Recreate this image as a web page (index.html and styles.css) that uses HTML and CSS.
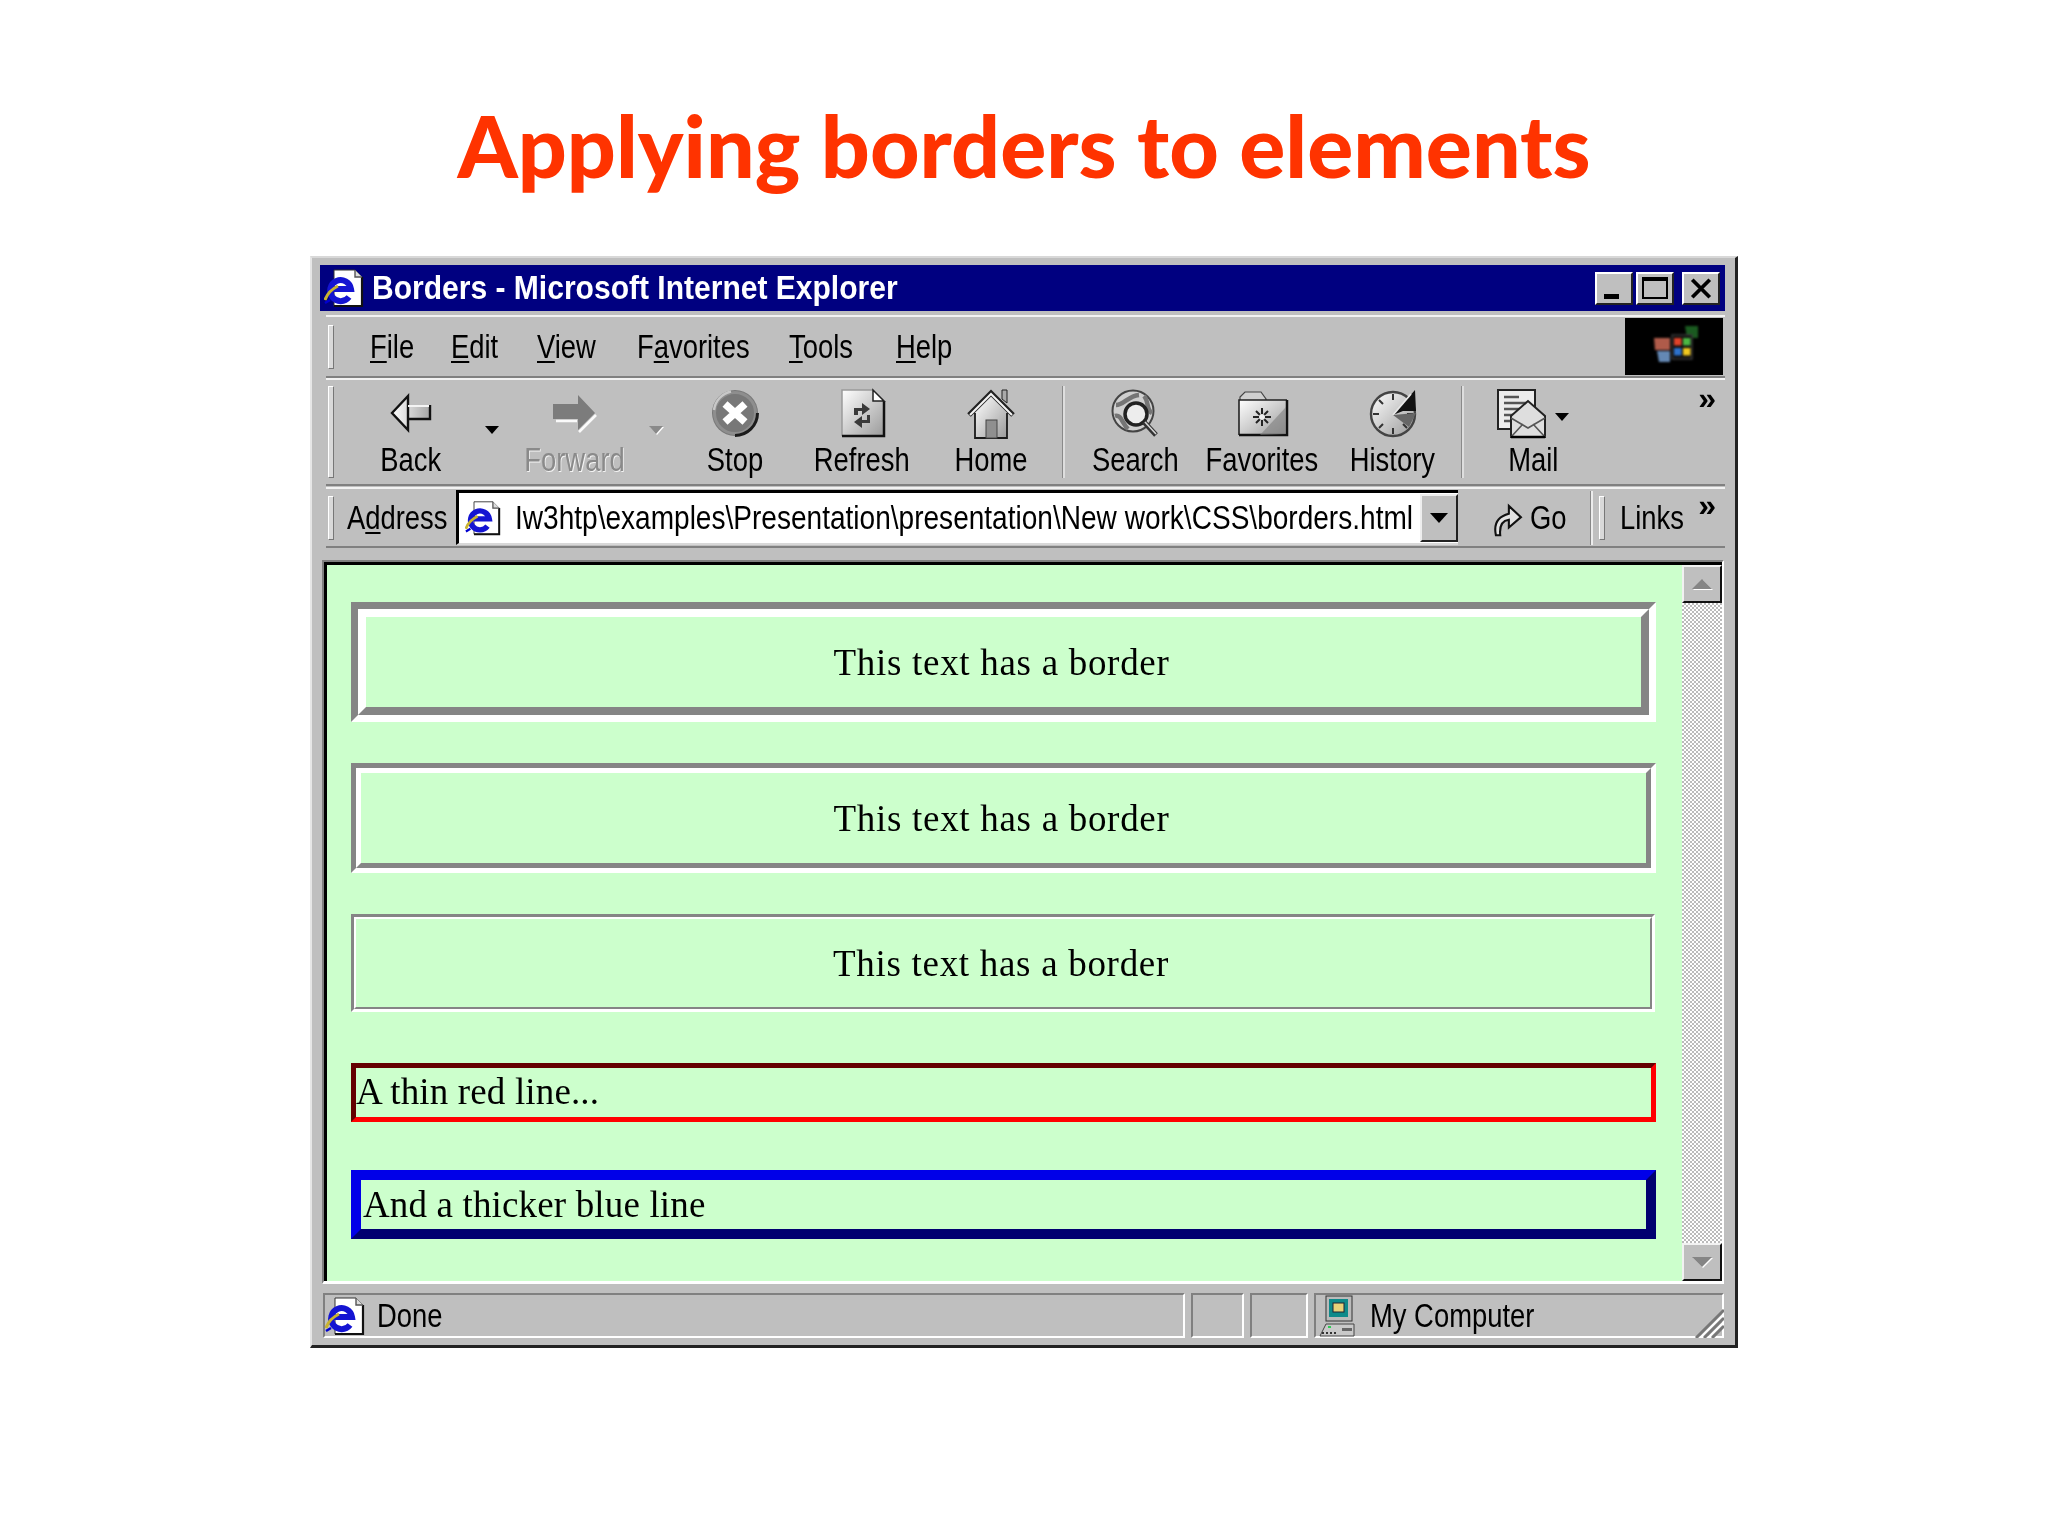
FILE: index.html
```html
<!DOCTYPE html>
<html lang="en">
<head>
<meta charset="utf-8">
<title>Applying borders to elements</title>
<link rel="stylesheet" href="styles.css">
</head>
<body>
<svg class="defs" width="0" height="0" aria-hidden="true">
  <defs>
    <linearGradient id="sheen" x1="0" y1="0" x2="1" y2="1"><stop offset="0" stop-color="#fff"/><stop offset="1" stop-color="#9a9a9a"/></linearGradient>
    <linearGradient id="sheenX" x1="0" y1="0" x2="1" y2="0"><stop offset="0" stop-color="#fff"/><stop offset="1" stop-color="#a6a6a6"/></linearGradient>
  </defs>
  <symbol id="ie" viewBox="0 0 40 40">
    <path d="M10 2H31L38 9V38H10Z" fill="#fff" stroke="#333" stroke-width="1"/>
    <path d="M38 9V38H10" fill="none" stroke="#111" stroke-width="2.2"/>
    <path d="M31 2V9H38" fill="#ddd" stroke="#555" stroke-width="1.4"/>
    <path d="M7 21H27A10.5 10.5 0 1 0 25 29" fill="none" stroke="#1414d2" stroke-width="6"/>
    <path d="M1 32C3 26 8 21 14 18" fill="none" stroke="#c9b32f" stroke-width="3"/>
    <path d="M1 35L6 32" stroke="#0000d0" stroke-width="2.5"/>
  </symbol>
</svg>
<h1 class="title">Applying borders to elements</h1>
<main class="window">
  <header class="titlebar">
    <svg class="tb-ie"><use href="#ie"/></svg>
    <span class="tb-text">Borders - Microsoft Internet Explorer</span>
    <span class="wbtn wmin"><i></i></span>
    <span class="wbtn wmax"><i></i></span>
    <span class="wbtn wclose">
      <svg viewBox="0 0 20 20"><path d="M3 3L17 17M17 3L3 17" stroke="#000" stroke-width="3"/></svg>
    </span>
  </header>

  <nav class="menurow">
    <span class="grip"></span>
    <div class="menus">
      <span class="nx"><u>F</u>ile</span>
      <span class="nx"><u>E</u>dit</span>
      <span class="nx"><u>V</u>iew</span>
      <span class="nx">F<u>a</u>vorites</span>
      <span class="nx"><u>T</u>ools</span>
      <span class="nx"><u>H</u>elp</span>
    </div>
    <div class="flag">
      <svg viewBox="0 0 98 57" width="98" height="57">
        <path d="M60 8H73V20H62Z" fill="#1f6a26" opacity=".85"/>
        <path d="M29 20H45V32H30Z" fill="#b8604e" opacity=".95"/>
        <path d="M32 33H45V44H34Z" fill="#6488b4"/>
        <path d="M47 17H67V41H47Z" fill="#0b0b0b" stroke="#3a3a3a" stroke-width="1.4"/>
        <rect x="49" y="20" width="7.500" height="7.500" fill="#e0432a"/>
        <rect x="58" y="20" width="7.500" height="7.500" fill="#4cb844"/>
        <rect x="49" y="30" width="7.500" height="7.500" fill="#2d72cc"/>
        <rect x="58" y="30" width="7.500" height="7.500" fill="#f0c820"/>
      </svg>
    </div>
  </nav>

  <section class="toolbar">
    <span class="grip tall"></span>
    <div class="tools">
      <button class="tbtn">
        <svg viewBox="0 0 48 48"><path d="M5 24L21 7V16H43V30H21V41Z" fill="url(#sheenX)"/><path d="M5 24L21 7V41ZM21 30H43V16" fill="none" stroke="#111" stroke-width="2.4"/><path d="M21 17H42" stroke="#f4f4f4" stroke-width="2"/></svg>
        <span class="lbl">Back</span>
      </button>
      <span class="drop"></span>
      <button class="tbtn off">
        <svg viewBox="0 0 48 48"><path d="M44 24L27 6V15H2V30H27V41Z" fill="#7c7c7c"/><path d="M5 32H26M28 43L45 26" fill="none" stroke="#fafafa" stroke-width="2.6"/></svg>
        <span class="lbl">Forward</span>
      </button>
      <span class="drop off"></span>
      <button class="tbtn">
        <svg viewBox="0 0 48 48"><circle cx="24" cy="24" r="23" fill="#787878"/><circle cx="24" cy="24" r="20.5" fill="none" stroke="#8e8e8e" stroke-width="3"/><path d="M3 21A21.5 21.5 0 0 1 20 2.500" fill="none" stroke="#c8c8c8" stroke-width="2.500"/><path d="M24 46.500A22.500 22.500 0 0 0 46.500 24" fill="none" stroke="#1c1c1c" stroke-width="3"/><path d="M14 15L34 33M34 15L14 33" stroke="#fff" stroke-width="7.500"/></svg>
        <span class="lbl">Stop</span>
      </button>
      <button class="tbtn">
        <svg viewBox="0 0 48 48"><path d="M4 1H35L46 12V47H4Z" fill="url(#sheen)"/><path d="M4 47V1H35" fill="none" stroke="#9a9a9a" stroke-width="1.500"/><path d="M4 47H46V12" fill="none" stroke="#111" stroke-width="2.500"/><path d="M35 1V12H46Z" fill="#fff" stroke="#222" stroke-width="1.500"/><path d="M16 26V19H24V14L32 20L24 26V22H20V26Z" fill="#3a3a3a"/><path d="M32 26V34H24V39L16 33L24 27V31H29V26Z" fill="#3a3a3a"/></svg>
        <span class="lbl">Refresh</span>
      </button>
      <button class="tbtn">
        <svg viewBox="0 0 48 48"><path d="M8 24V49H40V24L24 8Z" fill="url(#sheen)"/><path d="M8 24V49H40V24" fill="none" stroke="#1a1a1a" stroke-width="1.800"/><path d="M2 26L24 4L46 26" fill="none" stroke="#222" stroke-width="5"/><path d="M3 26L24 5L45 26" fill="none" stroke="#f4f4f4" stroke-width="2"/><path d="M35 1H40V14L35 10Z" fill="#aaa" stroke="#222"/><rect x="19" y="31" width="11" height="18" fill="#8f8f8f" stroke="#444"/></svg>
        <span class="lbl">Home</span>
      </button>
      <span class="sep"></span>
      <button class="tbtn">
        <svg viewBox="0 0 48 48"><circle cx="22" cy="22" r="20.500" fill="#cfcfcf" stroke="#444" stroke-width="2"/><path d="M5 16C13 16 17 7 28 6M4 27C10 25 11 34 17 40M33 7C38 12 35 21 41 24" fill="none" stroke="#757575" stroke-width="4.500"/><circle cx="25" cy="25" r="11" fill="#ededed" stroke="#222" stroke-width="3.500"/><path d="M33 33L45 46" stroke="#333" stroke-width="5"/><path d="M34 33L45 45" stroke="#d5d5d5" stroke-width="1.600"/></svg>
        <span class="lbl">Search</span>
      </button>
      <button class="tbtn">
        <svg viewBox="0 0 48 48"><path d="M2 14V8L7 3H23L28 10V14Z" fill="#cfcfcf" stroke="#444" stroke-width="1.200"/><path d="M1 11H49V46H1Z" fill="url(#sheen)"/><path d="M1 46V11H49" fill="none" stroke="#222" stroke-width="1.600"/><path d="M1 46H49V11" fill="none" stroke="#111" stroke-width="2.500"/><path d="M22 46L48 18V45Z" fill="#7f7f7f" opacity=".6"/><path d="M24 19V37M15 28H33M18 22L30 34M30 22L18 34" stroke="#222" stroke-width="2"/><circle cx="24" cy="28" r="3" fill="#eee"/></svg>
        <span class="lbl">Favorites</span>
      </button>
      <button class="tbtn">
        <svg viewBox="0 0 48 48"><circle cx="24" cy="25" r="22" fill="url(#sheen)" stroke="#444" stroke-width="2.400"/><path d="M24 5V11M24 39V45M4 25H10M38 25H44M10 11L14 15M10 39L14 35M38 39L34 35" stroke="#333" stroke-width="2"/><path d="M24 26L46 1L47 22H34Z" fill="#111"/><path d="M24 26L42 5" stroke="#e8e8e8" stroke-width="1.800"/><path d="M24 26L40 38L47 24Z" fill="#666"/></svg>
        <span class="lbl">History</span>
      </button>
      <span class="sep"></span>
      <button class="tbtn mail">
        <svg viewBox="0 0 48 48"><path d="M1 1H38V40H1Z" fill="#ececec" stroke="#222" stroke-width="2"/><path d="M7 8H22M7 14H32M7 20H32M7 26H24M7 32H18" stroke="#555" stroke-width="2.600"/><path d="M14 48V27L31 12L48 27V48Z" fill="#dedede" stroke="#222" stroke-width="2"/><path d="M14 29L31 39L48 29M14 48L26 35M48 48L36 35" fill="none" stroke="#555" stroke-width="1.600"/><path d="M14 48H48" stroke="#000" stroke-width="2.500"/></svg>
        <span class="lbl">Mail</span>
        <i class="drop-abs"></i>
      </button>
      <span class="chev chev-top">»</span>
    </div>
  </section>

  <section class="addressrow">
    <span class="grip"></span>
    <span class="addr-label"><span class="nx">A<u>d</u>dress</span></span>
    <div class="addr-input">
      <svg class="addr-ie"><use href="#ie"/></svg>
      <span class="url">Iw3htp\examples\Presentation\presentation\New work\CSS\borders.html</span>
      <span class="combo"><i></i></span>
    </div>
    <div class="go">
      <svg viewBox="0 0 34 44" width="32" height="38"><path d="M3 42C0 28 6 20 18 17V8L32 21L18 33V24C10 25 7 32 8 42Z" fill="#e2e2e2" stroke="#111" stroke-width="2.400"/></svg>
      <span class="nx">Go</span>
    </div>
    <span class="vline"></span>
    <span class="grip"></span>
    <span class="links nx">Links</span>
    <span class="chev chev-links">»</span>
  </section>

  <section class="viewframe">
    <div class="page">
      <div class="groove g1"><div class="groove-in">This text has a border</div></div>
      <div class="groove g2"><div class="groove-in">This text has a border</div></div>
      <div class="groove g3"><div class="groove-in">This text has a border</div></div>
      <div class="thinred">A thin red line...</div>
      <div class="thickblue">And a thicker blue line</div>
    </div>
    <aside class="scrollbar">
      <span class="sbtn"><i class="up"></i></span>
      <span class="strack"></span>
      <span class="sbtn"><i class="down"></i></span>
    </aside>
  </section>

  <footer class="status">
    <div class="cell cell-main">
      <svg class="st-ie"><use href="#ie"/></svg>
      <span class="nx">Done</span>
    </div>
    <div class="cell cell-s1"></div>
    <div class="cell cell-s2"></div>
    <div class="cell cell-zone">
      <svg viewBox="0 0 40 42" width="40" height="42"><rect x="8" y="1" width="26" height="25" fill="#bbb" stroke="#333"/><rect x="11" y="4" width="19" height="18" fill="#0f8a8a"/><rect x="15" y="8" width="11" height="9" fill="#e8d27a" stroke="#223"/><path d="M2 41L8 29H36V41Z" fill="#c9c9c9" stroke="#444"/><path d="M4 38H20" stroke="#333" stroke-dasharray="2 2" stroke-width="2"/><rect x="24" y="33" width="10" height="3" fill="#666"/><rect x="10" y="31" width="3" height="2" fill="#2ecc55"/></svg>
      <span class="nx">My Computer</span>
      <svg class="resize" viewBox="0 0 30 30" width="30" height="30"><path d="M2 30L30 2M10 30L30 10M18 30L30 18" stroke="#777" stroke-width="3"/><path d="M6 30L30 6M14 30L30 14" stroke="#fff" stroke-width="2"/></svg>
    </div>
  </footer>
</main>
</body>
</html>
```

FILE: styles.css
```css
* { box-sizing: border-box; }
html, body { margin: 0; padding: 0; background: #fff; }
body { width: 2048px; height: 1536px; overflow: hidden; }
.defs { position: absolute; }
u { text-decoration-thickness: 2px; text-underline-offset: 3px; }

.title {
  margin: 0;
  height: 256px;
  padding-top: 100px;
  text-align: center;
  font: 900 86px/90px "Lato", "Liberation Sans", sans-serif;
  color: #ff3300;
}

.window {
  width: 1428px;
  height: 1092px;
  margin-left: 310px;
  padding: 9px 10px 0 10px;
  display: flex;
  flex-direction: column;
  background: #bfbfbf;
  border-top: 2px solid #d8d8d8;
  border-left: 2px solid #e6e6e6;
  border-right: 3px solid #222;
  border-bottom: 3px solid #222;
  font: 33px/40px "Liberation Sans", sans-serif;
  color: #000;
  filter: blur(.4px);
}

.nx { display: inline-block; transform: scaleX(.83); transform-origin: left center; white-space: nowrap; }

/* title bar */
.titlebar {
  height: 46px;
  flex: none;
  margin-top: -2px;
  margin-left: -2px;
  background: #000080;
  display: flex;
  align-items: center;
  padding-right: 5px;
}
.tb-ie { width: 40px; height: 40px; margin-left: 4px; flex: none; }
.tb-text {
  margin-left: 8px; color: #fff; font-weight: bold; flex: 1; font-size: 33px;
  white-space: nowrap; transform: scaleX(.91); transform-origin: left center;
}
.wbtn {
  width: 38px; height: 33px; flex: none;
  background: #bfbfbf;
  border: 2px solid; border-color: #fff #222 #222 #fff;
  display: flex;
  position: relative;
}
.wmin { margin-right: 3px; }
.wmin i { width: 15px; height: 5px; background: #000; margin: 20px 0 0 7px; }
.wmax { margin-right: 8px; }
.wmax i { width: 26px; height: 22px; margin: 3px 0 0 4px; border: 2px solid #000; border-top-width: 4px; }
.wclose svg { width: 28px; height: 25px; margin: 2px 0 0 3px; }

/* chrome rows */
.menurow, .toolbar, .addressrow {
  flex: none;
  display: flex;
  align-items: center;
  border-top: 2px solid #f2f2f2;
  border-bottom: 2px solid #808080;
  margin-left: 4px;
}
.menurow { height: 63px; margin-top: 4px; position: relative; }
.toolbar { height: 108px; margin-top: 0; position: relative; }
.addressrow { height: 61px; margin-top: 1px; position: relative; }
.grip {
  width: 6px; height: 44px; flex: none; margin-left: 2px;
  background: #d9d9d9;
  border: 1px solid; border-color: #fff #777 #777 #fff;
}
.grip.tall { height: 92px; }

.menus {
  flex: 1;
  margin-left: 36px;
  display: grid;
  grid-template-columns: 81px 86px 100px 152px 107px 1fr;
}
.flag {
  width: 98px; height: 57px; flex: none; margin-right: 2px;
  background: #000;
}
.flag svg { display: block; filter: blur(1px); }

.tools {
  position: relative;
  flex: 1;
  height: 100%;
  margin-left: 6px;
  display: grid;
  grid-template-columns: 142px 22px 142px 20px 138px 116px 142px 8px 130px 124px 137px 12px 120px 1fr;
  align-items: stretch;
}
.tbtn {
  all: unset;
  position: relative;
  display: flex; flex-direction: column; align-items: center;
  padding-top: 9px;
  font: inherit;
  text-align: center;
}
.tbtn svg { width: 48px; height: 48px; display: block; overflow: visible; }
.lbl { margin-top: 3px; white-space: nowrap; transform: scaleX(.83); }
.tbtn.off .lbl { color: #8a8a8a; text-shadow: 1px 1px 0 #f4f4f4; }
.mail svg { margin-right: 24px; }
.drop, .drop-abs { position: relative; }
.drop::after, .drop-abs::after {
  content: ""; position: absolute; left: 3px; top: 46px;
  border: 7px solid transparent; border-top: 8px solid #000; border-bottom: 0;
}
.drop.off::after { border-top-color: #8a8a8a; filter: drop-shadow(1px 1px 0 #fff); }
.drop-abs { position: absolute; left: 79px; top: -13px; }
.sep { width: 3px; height: 92px; align-self: center; background: #dedede; border-left: 1px solid #8a8a8a; }
.chev { position: absolute; font: bold 32px/30px "Liberation Sans", sans-serif; right: 9px; }
.chev-top { top: 3px; }

.addr-label { margin-left: 13px; flex: none; width: 109px; font-size: 33px; }
.addr-input {
  width: 1002px; height: 55px; flex: none;
  background: #fff;
  border: 3px solid #000; border-right: 0; border-bottom: 2px solid #d8d8d8;
  display: flex; align-items: center;
  padding-left: 4px;
}
.addr-ie { width: 36px; height: 36px; flex: none; margin-left: 2px; }
.url {
  margin-left: 14px; flex: 1; min-width: 0; white-space: nowrap; font-size: 33px;
  transform: scaleX(.85); transform-origin: left center;
}
.combo {
  width: 38px; height: 48px; flex: none;
  background: #bfbfbf;
  border: 2px solid; border-color: #eee #222 #222 #eee;
  display: flex; align-items: center; justify-content: center;
}
.combo i { border: 9px solid transparent; border-top: 10px solid #000; border-bottom: 0; }
.go { display: flex; align-items: center; gap: 6px; margin-left: 34px; width: 98px; flex: none; }
.vline { width: 3px; height: 54px; flex: none; background: #ececec; border-left: 1px solid #888; }
.addressrow .grip { margin-left: 6px; }
.addressrow > .grip:first-child { margin-left: 2px; }
.links { margin-left: 15px; flex: none; }
.chev-links { top: 1px; }

/* viewport */
.viewframe {
  flex: none;
  height: 724px;
  margin-top: 12px;
  display: flex;
  border: 2px solid; border-color: #808080 #fff #fff #808080;
  border-bottom-width: 3px;
  margin-right: 1px;
}
.page {
  flex: 1;
  background: #ccffcc;
  border-top: 3px solid #000;
  border-left: 3px solid #000;
  padding: 37px 26px 0 24px;
  font: 37px/44px "Liberation Serif", serif;
  color: #000;
}
.groove { border-style: solid; border-color: #858585 #fff #fff #858585; }
.groove-in {
  height: 100%;
  border-style: solid;
  border-color: #fff #858585 #858585 #fff;
  display: flex; align-items: center; justify-content: center;
  padding: 2px 4px 0 0;
  letter-spacing: .7px;
}
.g1 { height: 120px; border-width: 7px; }
.g1 .groove-in { border-width: 8px; }
.g2 { height: 110px; margin-top: 41px; border-width: 5px; }
.g2 .groove-in { border-width: 5px; }
.g3 { height: 98px; margin-top: 41px; margin-right: 1px; border-width: 3px; }
.g3 .groove-in { border-width: 2px; }
.thinred {
  height: 59px; margin-top: 51px;
  border: 5px solid; border-color: #640000 #ff0000 #ff0000 #640000;
  padding-left: 0; line-height: 48px;
  letter-spacing: .15px;
}
.thickblue {
  height: 69px; margin-top: 48px;
  border: 10px solid; border-color: #0000e8 #000070 #000070 #0000e8;
  padding-left: 2px; line-height: 50px;
  letter-spacing: .15px;
}
.scrollbar {
  width: 40px; flex: none;
  display: flex; flex-direction: column;
  border-top: 3px solid #000;
  background: #bfbfbf;
}
.sbtn {
  height: 38px; flex: none;
  background: #bfbfbf;
  border: 2px solid; border-color: #f2f2f2 #111 #111 #f2f2f2;
  display: flex; align-items: center; justify-content: center;
}
.strack {
  flex: 1;
  background-color: #fff;
  background-image: linear-gradient(45deg, #bbb 25%, transparent 25%, transparent 75%, #bbb 75%), linear-gradient(45deg, #bbb 25%, transparent 25%, transparent 75%, #bbb 75%);
  background-size: 4px 4px;
  background-position: 0 0, 2px 2px;
}
.up { border: 10px solid transparent; border-bottom: 10px solid #858585; border-top: 0; filter: drop-shadow(1px 1px 0 #fff); }
.down { border: 10px solid transparent; border-top: 10px solid #858585; border-bottom: 0; filter: drop-shadow(1px 1px 0 #fff); }

/* status */
.status { flex: none; height: 45px; margin-top: 9px; display: flex; gap: 6px; margin-left: 1px; }
.cell { border: 2px solid; border-color: #808080 #fff #fff #808080; display: flex; align-items: center; }
.cell-main { width: 862px; }
.st-ie { width: 40px; height: 40px; margin-left: 0; flex: none; }
.cell-main .nx { margin-left: 12px; }
.cell-s1 { width: 53px; }
.cell-s2 { width: 58px; }
.cell-zone { flex: 1; position: relative; padding-left: 2px; margin-right: 1px; }
.cell-zone .nx { margin-left: 12px; }
.resize { position: absolute; right: -2px; bottom: -2px; }
```
